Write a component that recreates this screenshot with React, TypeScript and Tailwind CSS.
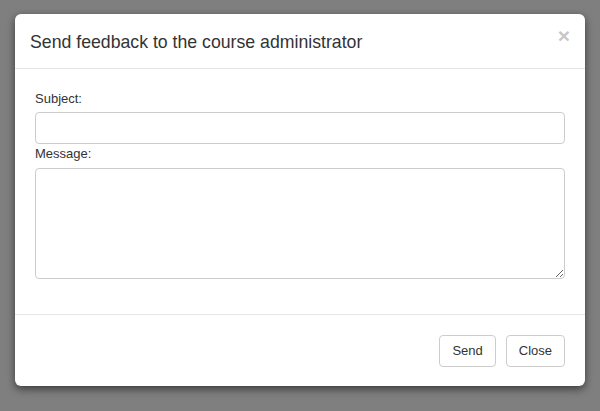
export default function App() {
  return (
    <div
      className="flex h-[411px] w-[600px] items-start justify-center bg-[#7f7f7f] pt-[14px]"
      style={{ fontFamily: '"Liberation Sans", Arial, sans-serif' }}
    >
      <div className="w-[570px] rounded-[6px] bg-white shadow-[0_3px_9px_rgba(0,0,0,0.55)]">
        <div className="flex items-start justify-between border-b border-[#e5e5e5] px-[15px] pt-[15px] pb-[13px]">
          <h4 className="text-[17.7px] leading-[26px] text-[#333]">Send feedback to the course administrator</h4>
          <button type="button" className="mt-[-4px] text-[21px] font-bold leading-[21px] text-[#c8c8c8]">
            ×
          </button>
        </div>

        <div className="px-[20px] pt-[20px] pb-[35px]">
          <label className="block text-[13px] leading-[20px] text-[#333]">Subject:</label>
          <input
            type="text"
            className="mt-[3px] block h-[32px] w-full rounded-[4px] border border-[#ccc] px-3 text-[13px] outline-none"
          />
          <label className="block text-[13px] leading-[20px] text-[#333]">Message:</label>
          <textarea className="mt-[4px] block h-[111px] w-full rounded-[4px] border border-[#ccc] px-3 py-2 text-[13px] outline-none" />
        </div>

        <div className="flex justify-end gap-[10px] border-t border-[#e5e5e5] px-[20px] pt-[20px] pb-[19px]">
          <button
            type="button"
            className="h-[32px] rounded-[4px] border border-[#ccc] bg-white px-[12px] text-[13px] text-[#333]"
          >
            Send
          </button>
          <button
            type="button"
            className="h-[32px] rounded-[4px] border border-[#ccc] bg-white px-[12px] text-[13px] text-[#333]"
          >
            Close
          </button>
        </div>
      </div>
    </div>
  );
}
